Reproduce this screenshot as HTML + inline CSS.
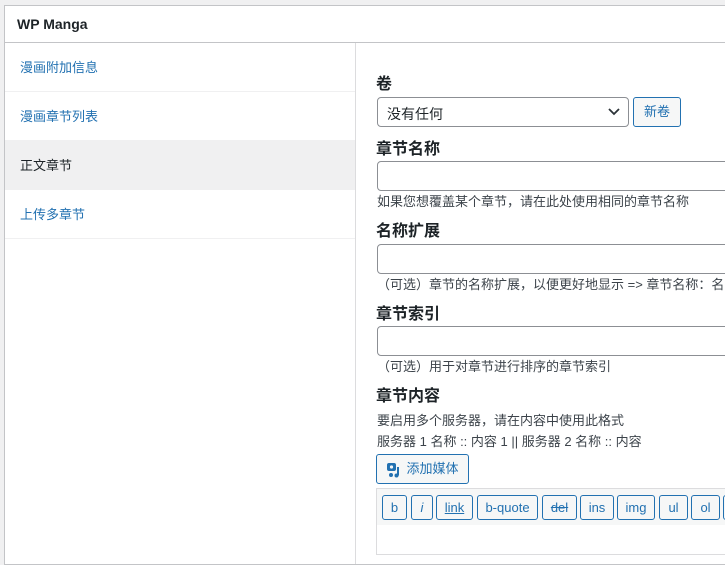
<!DOCTYPE html>
<html><head><meta charset="utf-8"><style>
*{box-sizing:border-box;margin:0;padding:0}
body{width:725px;height:545px;overflow:hidden;background:#f0f0f1;font-family:"Liberation Sans","Noto Sans CJK SC",sans-serif;color:#1d2327;position:relative}
.panel{position:absolute;left:4px;top:5px;width:730px;height:560px;background:#fff;border:1px solid #c3c4c7}
.hdr{height:37px;border-bottom:1px solid #c3c4c7;font-size:14px;font-weight:bold;padding:10px 0 0 12px}
.nav{position:absolute;left:0;top:37px;width:351px;bottom:0;border-right:1px solid #dcdcde}
.nav div{height:49px;border-bottom:1px solid #f0f0f1;font-size:13px;color:#2271b1;padding:14px 0 0 15px}
.nav div.act{background:#f0f0f1;color:#1d2327}
.lbl{position:absolute;left:376px;font-size:16px;font-weight:bold}
.inp{position:absolute;left:377px;width:360px;height:30px;border:1px solid #8c8f94;border-radius:4px;background:#fff}
.help{position:absolute;left:377px;font-size:13px;color:#3c434a;white-space:nowrap}
.btn{position:absolute;border:1px solid #2271b1;border-radius:3px;background:#f6f7f7;color:#2271b1;font-size:13px;text-align:center}
.tb{position:absolute;top:495px;height:25px;border:1px solid #2271b1;border-radius:3px;background:#f6f7f7;color:#2271b1;font-size:13px;text-align:center;line-height:23px}
</style></head><body>
<div class="panel">
<div class="hdr">WP Manga</div>
<div class="nav">
<div>漫画附加信息</div><div>漫画章节列表</div><div class="act">正文章节</div><div>上传多章节</div>
</div>
</div>
<div class="lbl" style="top:70px">卷</div>
<div class="inp" style="top:97px;width:252px;height:30px;padding:6px 9px;font-size:14px">没有任何
<svg style="position:absolute;right:8px;top:10px" width="12" height="8" viewBox="0 0 12 8"><path d="M1 1l5 5 5-5" fill="none" stroke="#2c3338" stroke-width="1.8"/></svg></div>
<div class="btn" style="left:633px;top:97px;width:48px;height:30px;line-height:28px">新卷</div>
<div class="lbl" style="top:135px">章节名称</div>
<div class="inp" style="top:161px"></div>
<div class="help" style="top:191px">如果您想覆盖某个章节，请在此处使用相同的章节名称</div>
<div class="lbl" style="top:217px">名称扩展</div>
<div class="inp" style="top:244px"></div>
<div class="help" style="top:274px">（可选）章节的名称扩展，以便更好地显示 =&gt; 章节名称：名</div>
<div class="lbl" style="top:300px">章节索引</div>
<div class="inp" style="top:326px"></div>
<div class="help" style="top:356px">（可选）用于对章节进行排序的章节索引</div>
<div class="lbl" style="top:382px">章节内容</div>
<div class="help" style="top:410px">要启用多个服务器，请在内容中使用此格式</div>
<div class="help" style="top:431px">服务器 1 名称 :: 内容 1 || 服务器 2 名称 :: 内容</div>
<div class="btn" style="left:376px;top:454px;width:93px;height:30px;line-height:28px;padding-left:20px">添加媒体
<svg style="position:absolute;left:9px;top:7px" width="17" height="16" viewBox="0 0 17 16"><rect x="1" y="1" width="9" height="8" rx="2" fill="#2271b1"/><circle cx="5.5" cy="5" r="1.6" fill="#f6f7f7"/><path d="M12 5v8.5" stroke="#2271b1" stroke-width="2"/><circle cx="10.5" cy="13.5" r="2" fill="#2271b1"/><circle cx="5" cy="13" r="2" fill="#2271b1"/></svg></div>
<div style="position:absolute;left:376px;top:488px;width:360px;height:38px;background:#f6f7f7;border:1px solid #dcdcde"></div>
<div style="position:absolute;left:376px;top:525px;width:360px;height:30px;background:#fff;border:1px solid #dcdcde;border-top:none"></div>
<div class="tb" style="left:382px;width:25px">b</div>
<div class="tb" style="left:411px;width:22px;font-style:italic">i</div>
<div class="tb" style="left:436px;width:37px;text-decoration:underline">link</div>
<div class="tb" style="left:477px;width:61px">b-quote</div>
<div class="tb" style="left:542px;width:35px;text-decoration:line-through">del</div>
<div class="tb" style="left:580px;width:34px">ins</div>
<div class="tb" style="left:617px;width:38px">img</div>
<div class="tb" style="left:659px;width:29px">ul</div>
<div class="tb" style="left:691px;width:29px">ol</div>
<div class="tb" style="left:723px;width:20px"></div>
</body></html>
